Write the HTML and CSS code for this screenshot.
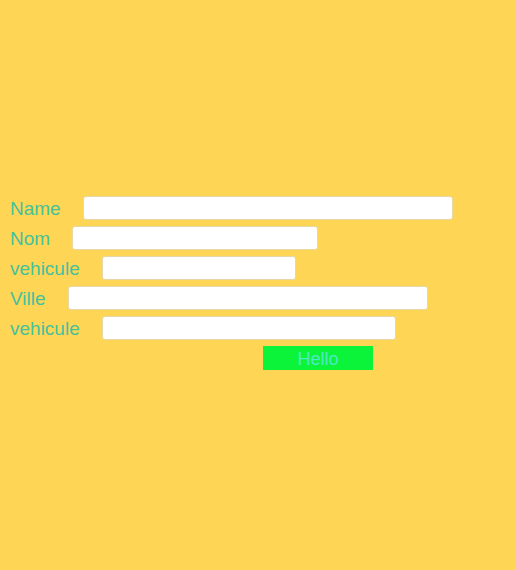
FILE: index.html
```html
<!DOCTYPE html>
<html>
<head>
<meta charset="utf-8">
<link rel="stylesheet" href="styles.css">
</head>
<body>
<form class="form">
  <div class="row"><label class="label">Name</label><input class="field w-name" type="text"></div>
  <div class="row"><label class="label">Nom</label><input class="field w-nom" type="text"></div>
  <div class="row"><label class="label">vehicule</label><input class="field w-veh" type="text"></div>
  <div class="row"><label class="label">Ville</label><input class="field w-ville" type="text"></div>
  <div class="row"><label class="label">vehicule</label><input class="field w-veh2" type="text"></div>
  <div class="actions"><button class="btn" type="button">Hello</button></div>
</form>
</body>
</html>
```
FILE: styles.css
```css
html, body {
  margin: 0;
  padding: 0;
  background: #ffd555;
  height: 100%;
}
.form {
  padding: 196px 0 0 10px;
  display: flex;
  flex-direction: column;
  gap: 6px;
}
.row {
  display: flex;
  align-items: center;
  height: 24px;
}
.label {
  font-family: "Liberation Sans", Arial, sans-serif;
  font-size: 19px;
  line-height: 24px;
  color: #45c19c;
  margin-right: 22px;
  padding-top: 2px;
}
.field {
  height: 24px;
  box-sizing: border-box;
  border: 1px solid #e6d7a8;
  border-radius: 3px;
  background: #fff;
  padding: 0;
  margin: 0;
}
.w-name { width: 370px; }
.w-nom { width: 246px; }
.w-veh { width: 194px; }
.w-ville { width: 360px; }
.w-veh2 { width: 294px; }
.actions {
  padding-left: 253px;
}
.btn {
  width: 110px;
  height: 24px;
  background: #0cf43a;
  border: none;
  border-radius: 0;
  color: #4ceac6;
  font-family: "Liberation Sans", Arial, sans-serif;
  font-size: 18px;
  padding: 2px 0 0;
}
```
